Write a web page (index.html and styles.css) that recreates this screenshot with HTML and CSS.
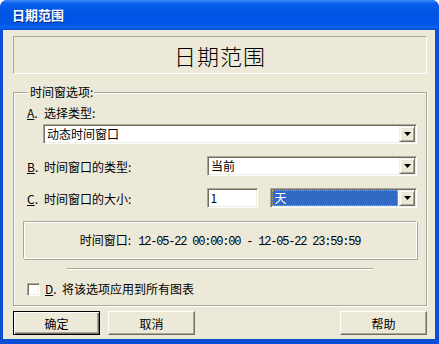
FILE: index.html
```html
<!DOCTYPE html>
<html lang="zh-CN">
<head>
  <meta charset="UTF-8" />
  <title>日期范围</title>
  <link rel="stylesheet" href="styles.css">
</head>
<body>

<div class="window">
  <div class="titlebar">日期范围</div>

  <div class="body">
    <div class="heading">日期范围</div>

    <fieldset class="group">
      <legend>时间窗选项:</legend>

      <div class="label-row"><span class="key"><u>A</u>.</span>选择类型:</div>
      <div class="combo wide">
        <span class="value">动态时间窗口</span>
        <span class="drop"><svg width="7" height="4" viewBox="0 0 7 4"><path d="M0 0h7L3.5 4z"/></svg></span>
      </div>

      <div class="field-row">
        <span class="label"><span class="key"><u>B</u>.</span>时间窗口的类型:</span>
        <div class="combo type">
          <span class="value">当前</span>
          <span class="drop"><svg width="7" height="4" viewBox="0 0 7 4"><path d="M0 0h7L3.5 4z"/></svg></span>
        </div>
      </div>

      <div class="field-row">
        <span class="label"><span class="key"><u>C</u>.</span>时间窗口的大小:</span>
        <div class="textbox">1</div>
        <div class="combo unit">
          <span class="value selected">天</span>
          <span class="drop"><svg width="7" height="4" viewBox="0 0 7 4"><path d="M0 0h7L3.5 4z"/></svg></span>
        </div>
      </div>

      <div class="info">时间窗口:<span class="stamp">12-05-22 00:00:00 - 12-05-22 23:59:59</span></div>

      <div class="separator"></div>

      <label class="check-row">
        <span class="checkbox"></span>
        <span class="key"><u>D</u>.</span>将该选项应用到所有图表
      </label>
    </fieldset>

    <div class="buttons">
      <button class="btn default">确定</button>
      <button class="btn">取消</button>
      <span class="spacer"></span>
      <button class="btn">帮助</button>
    </div>
  </div>
</div>

</body>
</html>
```

FILE: styles.css
```css
body {
  margin: 0;
  background-color: #fff;
  font-family: "Noto Sans CJK SC", "Liberation Sans", sans-serif;
  font-size: 12px;
  color: #000;
}

.window {
  width: 439px;
  height: 344px;
  box-sizing: border-box;
  display: flex;
  flex-direction: column;
  background-color: #0B4FD6;
  border-radius: 7px 7px 0 0;
  padding: 0 4px 5px 3px;
  overflow: hidden;
}

.titlebar {
  height: 30px;
  flex-shrink: 0;
  margin: 0 -4px 0 -3px;
  padding-left: 12px;
  box-sizing: border-box;
  background: linear-gradient(to bottom, #3B8CF6 0%, #0A5EEE 12%, #0054E3 45%, #0056E8 80%, #0A62F2 92%, #0848CE 100%);
  color: #fff;
  font-size: 13px;
  font-weight: bold;
  line-height: 30px;
  text-shadow: 1px 1px 0 #0A2A8A;
  border-radius: 7px 7px 0 0;
}

.body {
  flex: 1;
  background-color: #ECE9D8;
  padding: 6px 8px 0 10px;
  display: flex;
  flex-direction: column;
}

.heading {
  height: 38px;
  box-sizing: border-box;
  border: 1px solid;
  border-color: #ACA899 #fff #fff #ACA899;
  font-size: 22px;
  font-weight: 300;
  line-height: 36px;
  text-align: center;
  letter-spacing: 1px;
}

.group {
  margin: 11px 0 0;
  padding: 7px 9px 9px;
  border: 1px solid #ACA899;
  box-shadow: 1px 1px 0 #fff, inset 1px 1px 0 #fff;
  min-width: 0;
}

.group legend {
  padding: 0 1px 0 2px;
  margin-left: 5px;
  line-height: 14px;
  background-color: #ECE9D8;
}

.key {
  display: inline-block;
  width: 17px;
}

.label-row {
  margin-left: 4px;
  line-height: 14px;
  height: 14px;
}

.combo {
  height: 20px;
  box-sizing: border-box;
  border: 1px solid;
  border-color: #ACA899 #fff #fff #ACA899;
  box-shadow: inset 1px 1px 0 #716F64, inset -1px -1px 0 #F1EFE2;
  background-color: #fff;
  padding: 1px;
  display: flex;
  align-items: center;
}

.combo .value {
  flex: 1;
  padding-left: 2px;
  line-height: 16px;
  height: 16px;
}

.combo.wide {
  margin: 4px 0 0 20px;
}

.combo.type {
  width: 210px;
}

.combo.unit {
  width: 147px;
  margin-left: 12px;
}

.combo .value.selected {
  margin-right: 1px;
  padding-left: 1px;
  height: 14px;
  line-height: 14px;
  background-color: #316AC5;
  color: #fff;
  border: 1px dotted #D9A441;
}

.drop {
  width: 16px;
  height: 16px;
  box-sizing: border-box;
  background-color: #ECE9D8;
  border: 1px solid;
  border-color: #F1EFE2 #716F64 #716F64 #F1EFE2;
  box-shadow: inset 1px 1px 0 #fff, inset -1px -1px 0 #ACA899;
  display: flex;
  align-items: center;
  justify-content: center;
}

.drop svg {
  display: block;
  fill: #000;
}

.field-row {
  display: flex;
  align-items: center;
  margin-top: 12px;
  height: 20px;
}

.field-row .label {
  margin-left: 4px;
  width: 180px;
}

.textbox {
  width: 52px;
  height: 20px;
  box-sizing: border-box;
  border: 1px solid;
  border-color: #ACA899 #fff #fff #ACA899;
  box-shadow: inset 1px 1px 0 #716F64, inset -1px -1px 0 #F1EFE2;
  background-color: #fff;
  padding-left: 3px;
  line-height: 18px;
}

.info {
  margin-top: 13px;
  height: 38px;
  box-sizing: border-box;
  border: 1px solid;
  border-color: #ACA899 #fff #fff #ACA899;
  box-shadow: inset 1px 1px 0 #fff, 1px 1px 0 #ACA899;
  text-align: center;
  line-height: 36px;
}

.stamp {
  margin-left: 7px;
  font-family: "Liberation Mono", "DejaVu Sans Mono", monospace;
  font-size: 12px;
  letter-spacing: -1.2px;
}

.separator {
  margin: 9px 0 0 44px;
  width: 306px;
  height: 1px;
  background-color: #ACA899;
  border-bottom: 1px solid #fff;
}

.check-row {
  display: flex;
  align-items: center;
  margin: 12px 0 0 4px;
  height: 14px;
  line-height: 14px;
}

.checkbox {
  width: 13px;
  height: 13px;
  box-sizing: border-box;
  margin-right: 5px;
  border: 1px solid;
  border-color: #ACA899 #fff #fff #ACA899;
  box-shadow: inset 1px 1px 0 #716F64, inset -1px -1px 0 #F1EFE2;
  background-color: #fff;
}

.buttons {
  display: flex;
  margin-top: 5px;
}

.spacer {
  flex: 1;
}

.btn {
  width: 87px;
  height: 24px;
  margin-right: 8px;
  box-sizing: border-box;
  font-family: inherit;
  font-size: 12px;
  color: #000;
  background-color: #ECE9D8;
  border: 1px solid;
  border-color: #fff #716F64 #716F64 #fff;
  box-shadow: inset -1px -1px 0 #ACA899;
  padding: 0;
  cursor: pointer;
}

.btn:last-child {
  margin-right: 0;
}

.btn.default {
  border-color: #000;
  box-shadow: inset 1px 1px 0 #fff, inset -1px -1px 0 #716F64, inset -2px -2px 0 #ACA899;
}
```
